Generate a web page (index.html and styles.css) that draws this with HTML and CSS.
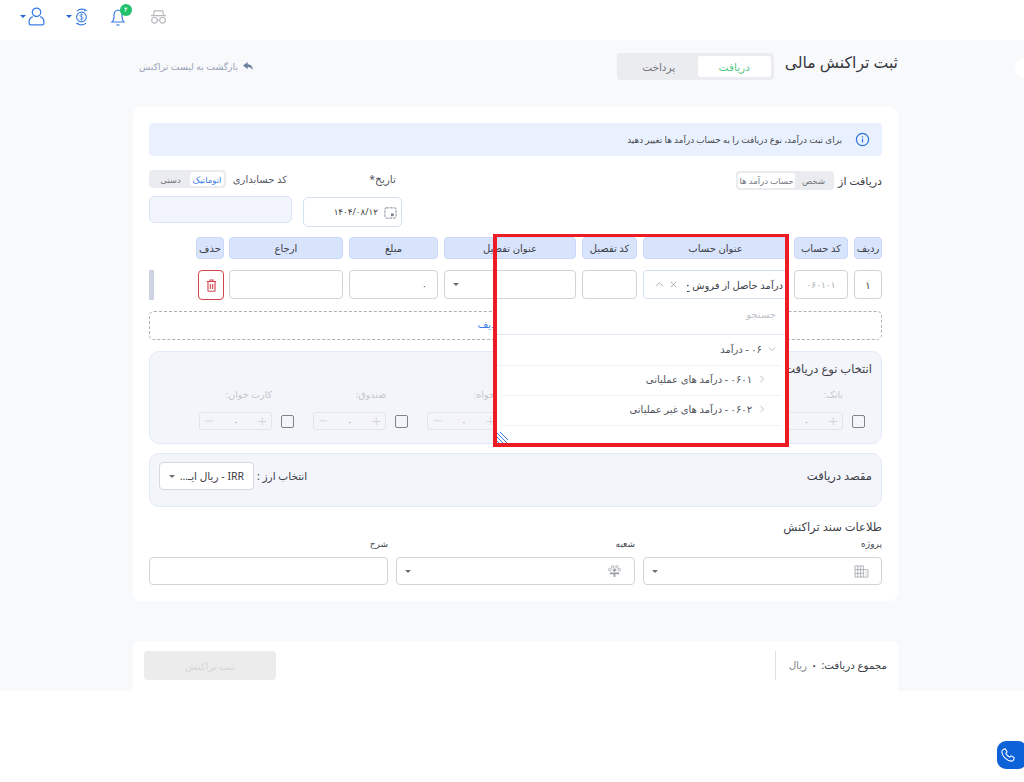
FILE: index.html
```html
<!DOCTYPE html>
<html lang="fa" dir="rtl">
<head>
<meta charset="utf-8">
<title>ثبت تراکنش مالی</title>
<link rel="stylesheet" href="styles.css">
</head>
<body>
<header class="topbar">
  <span class="caret blue"></span>
  <svg class="ico user" viewBox="0 0 16 18"><circle cx="8" cy="5" r="4"/><path d="M4.500 9.200C2.500 10 1 11.500 1 14v1.500Q1 17 2.500 17h11q1.500 0 1.500-1.500V14c0-2.500-1.500-4-3.500-4.800"/></svg>
  <span class="caret blue c2"></span>
  <svg class="ico coin" viewBox="0 0 16 20"><circle cx="8" cy="10" r="5.200"/><path d="M9.800 8.200Q9.300 7.200 8 7.200 6.200 7.200 6.300 8.700 6.400 9.800 8 10t1.700 1.400q0 1.400-1.700 1.400-1.300 0-1.800-1M8 6.200v7.600" stroke-width=".8"/><path d="M3 3.500Q8 0 13 3l-2 .6M13 16.500Q8 20 3 17l2-.6"/></svg>
  <span class="bell-wrap">
    <svg class="ico bell" viewBox="0 0 16 20"><path d="M2 15q2-2 2-5V8q0-4 4-5 4 1 4 5v2q0 3 2 5z"/><path d="M6.500 18h3"/></svg>
    <span class="badge">۴</span>
  </span>
  <svg class="ico spy" viewBox="0 0 18 16"><path d="M1 7h16M3.500 7l1-5h9l1 5"/><circle cx="4.700" cy="12" r="3"/><circle cx="13.300" cy="12" r="3"/><path d="M7.700 12h2.600"/></svg>
</header>

<main class="main">
  <div class="page-head">
    <h1 class="page-title">ثبت تراکنش مالی</h1>
    <div class="seg seg-lg">
      <span class="seg-on green">دریافت</span>
      <span class="seg-off">پرداخت</span>
    </div>
    <a class="back">
      <svg class="back-ico" viewBox="0 0 12 10"><path d="M5 0 0 4l5 4V5.500c3 0 4.500 1 5.500 3.500C11 5 9 2.700 5 2.500z"/></svg>
      بازگشت به لیست تراکنش
    </a>
  </div>

  <section class="card">
    <div class="alert">
      <svg class="info" viewBox="0 0 16 16"><circle cx="8" cy="8" r="6.500"/><path d="M8 7.200v4M8 4.500v1.300"/></svg>
      <span>برای ثبت درآمد، نوع دریافت را به حساب درآمد ها تغییر دهید</span>
    </div>

    <div class="meta">
      <div class="from">
        <span class="from-label">دریافت از</span>
        <div class="seg seg-sm"><span class="seg-off">شخص</span><span class="seg-on">حساب درآمد ها</span></div>
      </div>
      <div class="date-col">
        <label class="date-label">تاریخ*</label>
        <div class="date-input">
          <svg class="cal" viewBox="0 0 14 14"><rect x="1" y="2" width="12" height="11" rx="1.500" stroke-dasharray="3 1"/><rect x="7.500" y="8" width="3" height="3" fill="#7b8494" stroke="none"/></svg>
          <span>۱۴۰۴/۰۸/۱۲</span>
        </div>
      </div>
      <div class="code-col">
        <div class="code-head">
          <label>کد حسابداری</label>
          <div class="seg seg-xs"><span class="seg-on blue-t">اتوماتیک</span><span class="seg-off">دستی</span></div>
        </div>
        <div class="code-input"></div>
      </div>
    </div>

    <div class="row head-row">
      <div class="cols">
        <span class="th">ردیف</span><span class="th">کد حساب</span><span class="th">عنوان حساب</span><span class="th">کد تفصیل</span><span class="th">عنوان تفصیل</span><span class="th">مبلغ</span><span class="th">ارجاع</span><span class="th">حذف</span>
      </div>
    </div>

    <div class="row data-row">
      <div class="cols">
        <span class="td center">۱</span>
        <span class="td center muted">۰۶۰۱۰۱</span>
        <span class="td account"><span class="acc-text">درآمد حاصل از فروش خ</span>
          <svg class="mini x" viewBox="0 0 10 10"><path d="M2 2l6 6M8 2 2 8"/></svg>
          <svg class="mini up" viewBox="0 0 10 10"><path d="M1 7l4-4 4 4"/></svg></span>
        <span class="td"></span>
        <span class="td sel"><span class="caret"></span></span>
        <span class="td amount">۰</span>
        <span class="td"></span>
        <span class="del"><svg viewBox="0 0 14 16"><path d="M1 3h12M5 3V1h4v2M2.500 3v11.500q0 .8.8.8h7.400q.8 0 .8-.8V3M5.500 6v6.500M8.500 6v6.500"/></svg></span>
      </div>
      <span class="handle"></span>
    </div>

    <div class="add-row">+ افزودن ردیف</div>

    <section class="panel types">
      <h2 class="panel-title">انتخاب نوع دریافت</h2>
      <div class="type-grid">
        <div class="type"><span class="type-label">بانک:</span><div class="type-ctl"><span class="check"></span><span class="stepper"><i>+</i><b>۰</b><i>−</i></span></div></div>
        <div class="type"></div>
        <div class="type"></div>
        <div class="type"><span class="type-label">تنخواه:</span><div class="type-ctl"><span class="check"></span><span class="stepper"><i>+</i><b>۰</b><i>−</i></span></div></div>
        <div class="type"><span class="type-label">صندوق:</span><div class="type-ctl"><span class="check"></span><span class="stepper"><i>+</i><b>۰</b><i>−</i></span></div></div>
        <div class="type"><span class="type-label">کارت خوان:</span><div class="type-ctl"><span class="check"></span><span class="stepper"><i>+</i><b>۰</b><i>−</i></span></div></div>
      </div>
    </section>

    <section class="panel target">
      <h2 class="panel-title target-title">مقصد دریافت</h2>
      <div class="currency">
        <span class="cur-label">انتخاب ارز :</span>
        <span class="cur-select"><span>IRR - ریال ایـ...</span><span class="caret"></span></span>
      </div>
    </section>

    <h2 class="doc-title">طلاعات سند تراکنش</h2>
    <div class="doc-grid">
      <div class="field"><label>پروژه</label>
        <div class="box"><svg class="f-ico" viewBox="0 0 16 14"><path d="M1 1h9v12H1zM10 5h5v8h-5M4 1v12M7 1v12M1 5h9M1 9h9M12 8h1.500M12 10.500h1.500"/></svg><span class="caret"></span></div></div>
      <div class="field"><label>شعبه</label>
        <div class="box"><svg class="f-ico" viewBox="0 0 16 14"><circle cx="3" cy="5" r="1.500"/><circle cx="6" cy="1.800" r="1.300"/><circle cx="10.500" cy="1.800" r="1.300"/><circle cx="13" cy="5" r="1.500"/><circle cx="8" cy="5.500" r="1.400" fill="#9a9ea6"/><path d="M3 9h10M8 8v5" stroke-width="1.800"/></svg><span class="caret"></span></div></div>
      <div class="field"><label>شرح</label><div class="box"></div></div>
    </div>
  </section>

  <footer class="foot">
    <div class="sum"><span>مجموع دریافت:</span><b>۰</b><span class="rial">ریال</span></div>
    <button class="submit" disabled>ثبت تراکنش</button>
  </footer>
</main>

<span class="side-bump"></span>
<span class="phone"><svg viewBox="0 0 16 16"><path d="M3 1.500 5 1l2 3.500-1.500 1.500c.7 1.700 2.500 3.500 4.500 4.500L11.500 9l3.500 2-.5 2.500c-.5 1-1.500 1.500-2.500 1.500C6.500 15 1 9 1 4c0-1 1-2 2-2.500z"/></svg></span>

<div class="annot">
  <div class="dropdown">
    <div class="dd-search">جستجو</div>
    <div class="dd-item lvl0"><svg class="chev" viewBox="0 0 10 10"><path d="M1 3l4 4 4-4"/></svg><span>۰۶ - درآمد</span></div>
    <div class="dd-item lvl1"><svg class="chev" viewBox="0 0 10 10"><path d="M3 1 7 5 3 9"/></svg><span>۰۶۰۱ - درآمد های عملیاتی</span></div>
    <div class="dd-item lvl1"><svg class="chev" viewBox="0 0 10 10"><path d="M3 1 7 5 3 9"/></svg><span>۰۶۰۲ - درآمد های غیر عملیاتی</span></div>
    <svg class="hatch" viewBox="0 0 11 11"><path d="M0 1l10 10M0 5l6 6M0 9l2 2M3 0l8 8" /></svg>
  </div>
</div>
</body>
</html>
```
FILE: styles.css
```css
* { box-sizing: border-box; }
html, body { margin: 0; padding: 0; }
body {
  width: 1024px; height: 782px; overflow: hidden; position: relative; background: #fff;
  font-family: "Noto Sans", "DejaVu Sans", sans-serif; font-size: 10px; color: #40434a;
}
h1, h2 { margin: 0; font-weight: 400; }
.caret { display: inline-block; width: 0; height: 0; border: 3.500px solid transparent; border-top: 3.500px solid #6b6f76; border-bottom: 0; }
.caret.blue { border-top-color: #2167d8; }

.topbar { height: 40px; direction: ltr; display: flex; align-items: center; padding: 0 0 7px 20px; background: #fff; }
.ico { fill: none; stroke: #3b7de6; stroke-width: 1.200; display: block; }
.user { width: 17px; height: 19px; margin-left: 2px; }
.c2 { margin-left: 21px; }
.coin { width: 15px; height: 20px; margin-left: 2px; }
.bell-wrap { position: relative; margin-left: 21px; }
.bell { width: 16px; height: 20px; }
.badge { position: absolute; top: -3px; right: -6px; width: 12px; height: 12px; border-radius: 50%; background: #1fc16b; color: #fff; font-size: 7px; line-height: 12px; text-align: center; }
.spy { width: 17px; height: 15px; margin-left: 24px; stroke: #b7b9bd; }

.main { height: 651px; background: #f8f9fb; padding: 0 126px 0 133px; }
.page-head { height: 67px; display: flex; align-items: flex-start; padding-top: 13px; }
.page-title { font-size: 15.700px; line-height: 22px; color: #33363c; margin: -2px 0 0 11px; white-space: nowrap; }
.seg { display: flex; background: #ebecef; border-radius: 4px; }
.seg-lg { width: 157px; height: 27px; padding: 3px; font-size: 10.500px; }
.seg-lg .seg-on { width: 73px; }
.seg-lg .seg-off { flex: 1; }
.seg-on, .seg-off { display: flex; align-items: center; justify-content: center; border-radius: 3px; white-space: nowrap; }
.seg-on { background: #fff; }
.seg-off { color: #73767d; }
.green { color: #52c983; }
.back { margin-right: auto; margin-left: 6px; margin-top: 7px; display: flex; align-items: center; gap: 5px; color: #98a3b9; font-size: 9.300px; white-space: nowrap; }
.back-ico { width: 11px; height: 9px; fill: #6b7f9f; }

.card { height: 494px; background: #fff; border-radius: 8px; padding: 16px; }
.alert { height: 33px; border-radius: 4px; background: #e9f0fe; display: flex; align-items: center; padding-right: 12px; gap: 13px; font-size: 8.800px; color: #44474e; }
.info { width: 15px; height: 15px; fill: none; stroke: #2b74d9; stroke-width: 1.300; }

.meta { height: 56px; margin-top: 14px; display: flex; align-items: flex-start; }
.from { display: flex; align-items: center; gap: 4px; margin-left: auto; padding-top: 1px; }
.from-label { font-size: 11px; color: #3d4046; }
.seg-sm { height: 19px; width: 98px; padding: 2px; font-size: 8.500px; }
.seg-sm .seg-off { flex: 1; }
.seg-sm .seg-on { width: 57px; color: #73767d; }
.date-col { width: 99px; margin-left: 11px; }
.date-label { display: block; height: 27px; line-height: 18px; padding-right: 6px; font-size: 10.500px; color: #55585f; }
.date-input { height: 30px; border: 1px solid #d5dff2; border-radius: 5px; display: flex; align-items: center; gap: 6px; padding-right: 4px; font-size: 8.800px; color: #3d4046; }
.cal { width: 13px; height: 13px; fill: none; stroke: #7b8494; }
.code-col { width: 143px; }
.code-head { display: flex; justify-content: space-between; align-items: center; height: 18px; padding-right: 5px; margin-bottom: 8px; }
.code-head label { font-size: 10px; color: #55585f; }
.seg-xs { width: 77px; height: 18px; padding: 2px; font-size: 8.500px; }
.seg-xs .seg-on { width: 34px; }
.seg-xs .seg-off { flex: 1; }
.blue-t { color: #3b7de6; }
.code-input { height: 27px; background: #f3f5fc; border: 1px solid #dde6f8; border-radius: 5px; }

.row { display: flex; justify-content: space-between; align-items: stretch; }
.cols { width: 686px; display: grid; grid-template-columns: 28px 54px 145px 55px 132px 89px 114px 27px; column-gap: 6px; }
.head-row { margin-top: 11px; }
.th { height: 22px; background: #d8e3fc; border: 1px solid #c8d7fa; border-radius: 4px; display: flex; align-items: center; justify-content: center; font-size: 10px; color: #3d4046; white-space: nowrap; overflow: hidden; }
.th:last-child { margin-right: -1px; }
.data-row { margin-top: 11px; height: 30px; }
.td { height: 29px; border: 1px solid #d2d3d6; border-radius: 4px; display: flex; align-items: center; background: #fff; font-size: 10px; overflow: hidden; }
.center { justify-content: center; }
.muted { color: #a9abb1; font-size: 9px; }
.account { padding: 0 4px 0 8px; gap: 0; border-color: #d5dff2; }
.acc-text { width: 96px; white-space: nowrap; overflow: hidden; font-size: 10px; flex: none; }
.mini { width: 9px; height: 9px; fill: none; stroke: #a3a6ad; stroke-width: 1; flex: none; }
.x { margin-right: 9px; }
.up { margin-right: 5px; }
.sel { justify-content: flex-end; padding-left: 8px; }
.amount { padding-right: 10px; color: #55585f; }
.del { height: 30px; width: 26px; margin-right: -1px; border: 1px solid #d3454e; border-radius: 4px; display: flex; align-items: center; justify-content: center; }
.del svg { width: 11px; height: 13px; fill: none; stroke: #d3454e; stroke-width: 1.400; }
.handle { width: 5px; height: 30px; background: #cdd3e0; }
.add-row { margin-top: 11px; height: 29px; border: 1px dashed #aeb0b5; border-radius: 5px; display: flex; align-items: center; justify-content: center; padding: 0 10px 3px 0; color: #3b7de6; font-size: 10.500px; }

.panel { background: #f3f5fb; border: 1px solid #e2e9fb; border-radius: 10px; position: relative; }
.types { margin-top: 11px; height: 93px; padding: 9px 9px 0 0; }
.panel-title { font-size: 11.500px; line-height: 16px; color: #3d4046; }
.type-grid { display: grid; grid-template-columns: repeat(6, 114.200px); margin-top: 10px; padding-right: 7px; }
.type { display: flex; flex-direction: column; }
.type-label { height: 25px; padding-right: 22px; line-height: 16px; font-size: 9.500px; color: #c3c6cc; white-space: nowrap; }
.type-ctl { display: flex; align-items: center; gap: 9px; }
.check { width: 13px; height: 13px; border: 1.500px solid #808285; border-radius: 2px; flex: none; }
.stepper { width: 73px; height: 18px; border: 1px solid #e3e5ea; border-radius: 3px; display: flex; align-items: center; justify-content: space-between; padding: 0 4px; color: #d2d4d9; }
.stepper i { font-style: normal; font-size: 17px; line-height: 16px; font-weight: 300; }
.stepper b { font-weight: 400; font-size: 9px; color: #8d9096; }
.target { margin-top: 9px; height: 54px; display: flex; align-items: flex-start; justify-content: space-between; padding: 8px 9px 0; }
.target-title { line-height: 28px; }
.currency { display: flex; align-items: center; gap: 3px; }
.cur-label { font-size: 10.500px; color: #3d4046; }
.cur-select { width: 95px; height: 28px; background: #fff; border: 1px solid #d8d9dc; border-radius: 4px; display: flex; align-items: center; justify-content: space-between; padding: 0 9px; font-size: 10.500px; color: #3d4046; white-space: nowrap; }
.doc-title { margin-top: 12px; font-size: 11.500px; line-height: 16px; color: #3d4046; }
.doc-grid { display: grid; grid-template-columns: repeat(3, 239px); column-gap: 8px; margin-top: 2px; }
.field label { display: block; height: 20px; line-height: 14px; font-size: 9px; color: #44474d; }
.box { height: 28px; border: 1px solid #d2d3d6; border-radius: 4px; background: #fff; display: flex; align-items: center; justify-content: space-between; padding: 0 12px 0 8px; }
.f-ico { width: 15px; height: 13px; fill: none; stroke: #9a9ea6; stroke-width: .8; }

.foot { margin-top: 40px; height: 50px; background: #fff; border-radius: 6px 6px 0 0; display: flex; align-items: flex-start; justify-content: space-between; padding: 10px 11px 0; }
.sum { height: 29px; width: 112px; border-left: 1px solid #dfe1e6; display: flex; align-items: center; gap: 4px; padding-bottom: 2px; font-size: 10.300px; color: #3d4046; white-space: nowrap; }
.sum b { font-weight: 700; }
.rial { color: #85888e; }
.submit { width: 132px; height: 29px; border: 0; border-radius: 4px; background: #ececed; color: #d4d5d8; font: inherit; font-size: 10px; }

.side-bump { position: absolute; top: 58px; left: 1015px; width: 20px; height: 20px; border-radius: 50%; background: #fff; }
.phone { position: absolute; top: 741px; left: 997px; width: 30px; height: 28px; border-radius: 9px; background: #0d62d8; display: flex; align-items: center; padding-right: 12px; }
.phone svg { width: 14px; height: 14px; fill: none; stroke: #fff; stroke-width: 1.200; }

.annot { position: absolute; left: 493px; top: 234px; width: 296px; height: 213px; border: solid #ed1c24; border-width: 3.500px 4px 4px; }
.dropdown { position: absolute; left: 0; right: 0; top: 63px; bottom: 0; background: #fff; }
.dd-search { height: 35px; border-bottom: 1px solid #e2e7f2; padding-right: 9px; line-height: 28px; font-size: 10px; color: #c0c3c9; }
.dd-item { display: flex; align-items: center; gap: 6px; height: 30px; padding-bottom: 3px; border-bottom: 1px solid #f1f2f5; margin-right: 4px; font-size: 10px; color: #50535a; }
.lvl0 { padding-right: 5px; height: 31px; }
.lvl1 { padding-right: 15px; margin-left: 4px; }
.chev { width: 8px; height: 8px; fill: none; stroke: #a3a6ad; stroke-width: .9; flex: none; }
.hatch { position: absolute; left: 0; bottom: 0; width: 11px; height: 11px; fill: none; stroke: #3b7de6; stroke-width: 1; }
```
